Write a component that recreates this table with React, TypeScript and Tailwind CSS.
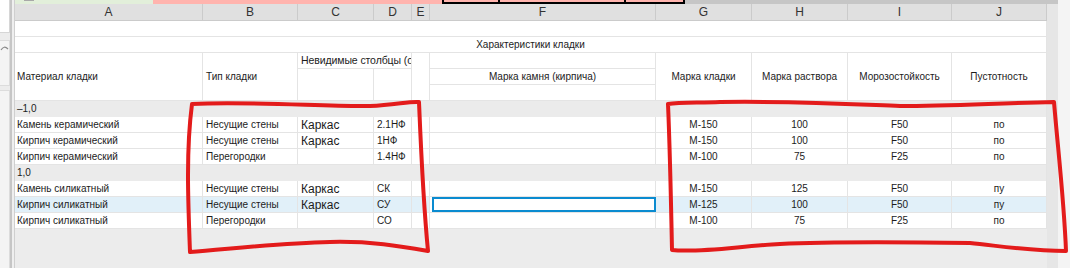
import type { ReactNode } from 'react';

type Row = {
  a: string;
  b: string;
  c: string;
  d: string;
  g: string;
  h: string;
  i: string;
  j: string;
  selected?: boolean;
};

type Group = { title: string; rows: Row[] };

const groups: Group[] = [
  {
    title: '–1,0',
    rows: [
      { a: 'Камень керамический', b: 'Несущие стены', c: 'Каркас', d: '2.1НФ', g: 'М-150', h: '100', i: 'F50', j: 'по' },
      { a: 'Кирпич керамический', b: 'Несущие стены', c: 'Каркас', d: '1НФ', g: 'М-150', h: '100', i: 'F50', j: 'по' },
      { a: 'Кирпич керамический', b: 'Перегородки', c: '', d: '1.4НФ', g: 'М-100', h: '75', i: 'F25', j: 'по' },
    ],
  },
  {
    title: '1,0',
    rows: [
      { a: 'Камень силикатный', b: 'Несущие стены', c: 'Каркас', d: 'СК', g: 'М-150', h: '125', i: 'F50', j: 'пу' },
      { a: 'Кирпич силикатный', b: 'Несущие стены', c: 'Каркас', d: 'СУ', g: 'М-125', h: '100', i: 'F50', j: 'пу', selected: true },
      { a: 'Кирпич силикатный', b: 'Перегородки', c: '', d: 'СО', g: 'М-100', h: '75', i: 'F25', j: 'по' },
    ],
  },
];

const letters = ['A', 'B', 'C', 'D', 'E', 'F', 'G', 'H', 'I', 'J'];

function Cell({ className = '', children }: { className?: string; children?: ReactNode }) {
  return (
    <div className={`border-r border-b border-[#e4e4e4] flex items-center overflow-hidden whitespace-nowrap ${className}`}>
      {children}
    </div>
  );
}

function LeftPanel() {
  return (
    <div className="w-[15px] h-full flex shrink-0">
      <div className="w-[10px] flex flex-col bg-[#ececec]">
        <div className="h-[33px] bg-white border-r border-b border-[#d6d6d6]" />
        <div className="mt-[7px] h-[46px] bg-[#f4f4f4] border-r border-y border-[#dcdcdc]">
          <svg width="9" height="12" viewBox="0 0 9 12">
            <path d="M1 9 Q4 4 8 8" fill="none" stroke="#8a8a8a" strokeWidth="1.2" />
          </svg>
        </div>
        <div className="mt-[4px] flex-1 bg-[#f4f4f4] border-r border-t border-[#dcdcdc]" />
      </div>
      <div className="w-[2px] bg-[#c6c6c6]" />
      <div className="w-[2px] bg-[#efefef]" />
      <div className="w-[1px] bg-[#cfcfcf]" />
    </div>
  );
}

function TopStrip() {
  return (
    <div className="h-[4px] flex shrink-0">
      <div className="w-[138px] bg-[#e2efda] relative">
        <div className="absolute left-[9px] top-0 w-[10px] h-[1px] bg-[#a8a8a8]" />
      </div>
      <div className="w-[289px] bg-[#ffb4ae]" />
      <div className="w-[243px] flex bg-[#ffb4ae] border-2 border-t-0 border-black">
        <div className="w-[56px] border-r-2 border-black" />
        <div className="w-[126px] border-r-2 border-black" />
      </div>
      <div className="flex-1 bg-[#c6c6c6]" />
    </div>
  );
}

function DataRow({ row }: { row: Row }) {
  const bg = row.selected ? 'bg-[#e1f0f9]' : 'bg-white';
  return (
    <>
      <Cell className={`${bg} pl-[2px]`}>{row.a}</Cell>
      <Cell className={`${bg} pl-[3px]`}>{row.b}</Cell>
      <Cell className={`${bg} pl-[3px] text-[12px]`}>{row.c}</Cell>
      <Cell className={`${bg} pl-[3px]`}>{row.d}</Cell>
      <Cell className={bg} />
      {row.selected ? (
        <div className="bg-white flex items-center border-b border-[#e4e4e4]">
          <div className="ml-[2px] w-[224px] h-[15px] border-2 border-[#0a8bd0] bg-white" />
        </div>
      ) : (
        <Cell className={bg} />
      )}
      <Cell className={`${bg} justify-center`}>{row.g}</Cell>
      <Cell className={`${bg} justify-center`}>{row.h}</Cell>
      <Cell className={`${bg} justify-center`}>{row.i}</Cell>
      <Cell className={`${bg} justify-center`}>{row.j}</Cell>
    </>
  );
}

function GroupRows({ group }: { group: Group }) {
  return (
    <>
      <div className="col-span-10 bg-[#ebebeb] border-r border-[#e4e4e4] flex items-center pl-[2px]">{group.title}</div>
      {group.rows.map((r, idx) => (
        <DataRow key={idx} row={r} />
      ))}
    </>
  );
}

function Sheet() {
  return (
    <div className="w-[1032px] grid grid-cols-[188px_95px_76px_38px_18px_226px_96px_96px_104px_95px] grid-rows-[17px_repeat(13,16px)] self-start text-[10px] text-[#1c1c1c] leading-none">
      {letters.map((l) => (
        <div
          key={l}
          className="bg-[#e0e0e0] border-r border-b border-[#cbcbcb] flex items-center justify-center text-[12px] text-[#333]"
        >
          {l}
        </div>
      ))}

      <Cell className="col-span-10 bg-white" />
      <Cell className="col-span-10 bg-white justify-center">Характеристики кладки</Cell>

      <Cell className="row-span-3 bg-white pl-[2px]">Материал кладки</Cell>
      <Cell className="row-span-3 bg-white pl-[3px]">Тип кладки</Cell>
      <Cell className="col-span-2 bg-white pl-[3px] text-[10.5px] tracking-[-0.1px]">Невидимые столбцы (о</Cell>
      <Cell className="row-span-3 bg-white" />
      <Cell className="bg-white" />
      <Cell className="row-span-3 bg-white justify-center">Марка кладки</Cell>
      <Cell className="row-span-3 bg-white justify-center">Марка раствора</Cell>
      <Cell className="row-span-3 bg-white justify-center">Морозостойкость</Cell>
      <Cell className="row-span-3 bg-white justify-center">Пустотность</Cell>
      <Cell className="row-span-2 bg-white" />
      <Cell className="row-span-2 bg-white" />
      <Cell className="bg-white justify-center">Марка камня (кирпича)</Cell>
      <Cell className="bg-white" />

      {groups.map((g) => (
        <GroupRows key={g.title} group={g} />
      ))}
    </div>
  );
}

function Marks() {
  return (
    <svg className="absolute inset-0 pointer-events-none" width="1070" height="268" viewBox="0 0 1070 268">
      <g fill="none" stroke="#e31b1b" strokeWidth="4" strokeLinecap="round" strokeLinejoin="round">
        <path d="M192 104 C250 101 330 107 370 106 C395 105 410 101 419 102 C421 150 423 200 428 251 C400 246 370 241 330 242 C280 243 230 249 190 252 C188 200 186 150 192 104" />
        <path d="M668 104 C680 102 700 103 720 102 C800 101 850 104 900 106 C950 106 1000 103 1054 102 C1058 150 1064 200 1066 251 C1030 251 1000 246 970 243 C900 242 820 242 780 244 C740 246 700 253 672 250 C671 200 670 150 668 104" />
      </g>
    </svg>
  );
}

export default function App() {
  return (
    <div className="w-[1070px] h-[268px] flex bg-[#ececec] overflow-hidden relative font-['Liberation_Sans',sans-serif]">
      <LeftPanel />
      <div className="w-[1043px] flex flex-col shrink-0">
        <TopStrip />
        <div className="flex flex-1">
          <Sheet />
          <div className="w-[11px] bg-[#e6e6e6]" />
        </div>
      </div>
      <div className="w-[12px] bg-[#f4f4f4]" />
      <Marks />
    </div>
  );
}
